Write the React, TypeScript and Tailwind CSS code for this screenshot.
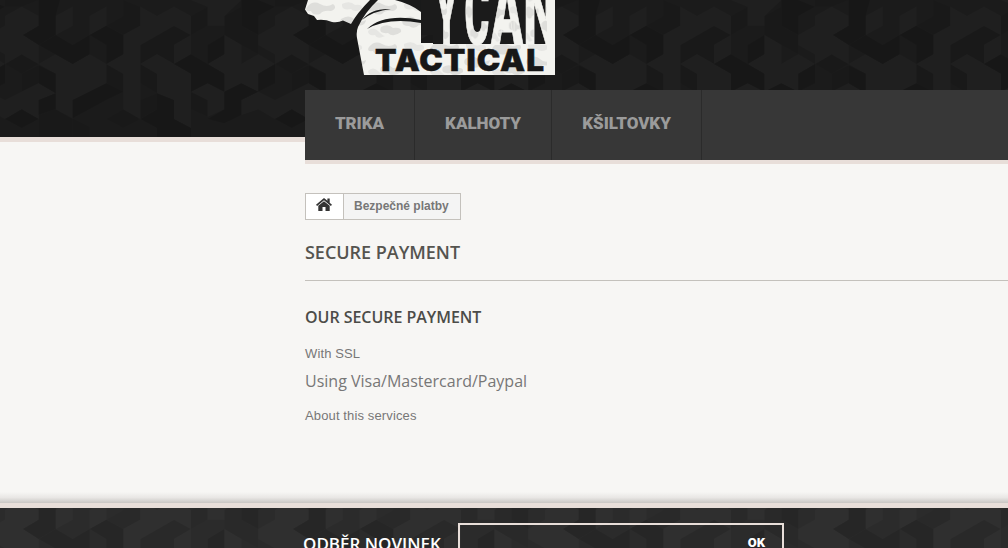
import React from 'react';

// Points are on a 810 unit wide cube grid, drawn at one third of that size
const DARK = [
  '116,0 180,0 167,48 167,105 116,135 69,105 116,77',
  '116,135 167,105 218,135 269,105 319,77 370,105 370,163 319,192 319,135 269,105 269,163 218,192',
  '116,196 167,221 167,280 116,250',
  '218,300 319,250 370,275 319,300 218,355',
  '522,192 573,163 623,192 673,221 673,275 623,250 573,275 573,221',
  '623,135 673,105 673,163 623,192',
  '775,221 825,192 825,250 775,275',
  '421,357 471,328 471,280 522,300 522,357 573,384 573,410 471,410 471,384',
  '623,357 673,328 673,275 724,250 775,275 724,300 724,345 673,370',
  '15,357 65,328 116,357 65,384',
  '116,300 167,280 167,328 116,345',
  '724,0 775,0 825,20 775,48 775,105 724,77',
];

const MID = [
  '15,192 65,163 116,192 65,221',
  '421,135 522,77 573,105 522,135 522,192 471,163 421,192',
  '319,192 370,221 370,280 319,250',
  '421,192 471,221 471,280 421,250',
  '370,0 421,20 421,77 370,105 319,77 370,48',
  '573,48 623,20 623,77 573,105',
  '673,48 724,20 724,77 775,105 775,163 724,135 673,105',
  '421,300 471,280 471,328 421,357',
  '573,275 623,300 623,350 573,328',
  '65,221 116,196 116,250 65,275',
  '15,0 116,0 65,20 15,20',
  '116,345 167,328 218,357 218,410 116,410',
  '218,355 269,380 269,410 218,410',
  '319,357 370,328 421,357 370,384',
];

const LIGHT = [
  '15,48 65,20 116,48 116,77 69,105 116,135 116,192 65,163 15,192',
  '167,48 218,20 218,77 167,105',
  '269,48 319,20 319,77 269,105',
  '116,192 167,163 218,192 269,163 319,192 319,250 218,300 218,355 167,328 167,221',
  '370,105 421,77 421,20 471,48 522,20 573,48 573,105 522,77 421,135 421,357 370,328 370,221 319,192 370,163',
  '421,192 471,163 522,192 573,221 573,384 522,357 522,300 471,280 471,221',
  '522,135 573,105 573,163 522,192',
  '623,192 673,163 673,105 724,135 724,192 775,163 825,192 775,221 775,275 724,250 673,275 673,221',
  '573,275 623,250 673,275 673,328 623,350 623,300',
  '15,300 116,250 167,280 116,300 116,357 65,328 15,357',
  '724,300 775,275 825,300 825,357 775,328 724,345',
  '775,105 825,77 825,163 775,135',
  '573,0 724,0 673,48 673,77 623,77 623,20',
];

function Cubes({ id, y, base, dark, mid, light }: {
  id: string; y: number; base: string; dark: string; mid: string; light: string;
}) {
  return (
    <svg className="absolute inset-0 h-full w-full" aria-hidden="true">
      <defs>
        <pattern id={id} width="270" height="137" y={y} patternUnits="userSpaceOnUse" x="5">
          <rect width="270" height="137" fill={base} />
          <g transform="translate(-5 0) scale(.33333)">
            {MID.map((p) => <polygon key={p} points={p} fill={mid} />)}
            {LIGHT.map((p) => <polygon key={p} points={p} fill={light} />)}
            {DARK.map((p) => <polygon key={p} points={p} fill={dark} />)}
          </g>
        </pattern>
      </defs>
      <rect width="100%" height="100%" fill={`url(#${id})`} />
    </svg>
  );
}

function Logo() {
  return (
    <svg className="relative block" width="250" height="75" viewBox="0 0 250 75">
      <defs>
        <pattern id="camo" width="62" height="40" patternUnits="userSpaceOnUse">
          <rect width="62" height="40" fill="#f3f3ef" />
          <path d="M2 7q6-7 13-3t13 0q5 4-2 7-8-1-11 3-7 2-9-3-7 1-4-4zM36 19q8-5 13 0t12 1q-1 7-9 5-5 5-10 1-9 0-6-7zM14 27q7-4 12 1 9-1 8 4-8 6-13 1-10 1-7-6z" fill="#dededb" />
          <path d="M37 4q8-4 13 1 8-1 7 4-7 4-11 0-10 2-9-5zM1 31q5-5 10 0t7 5q-8 4-10-1-7 1-7-4z" fill="#e6e6e3" />
        </pattern>
      </defs>
      <path
        d="M3 0L0 9.500L3 14L9 16L12 20Q20 19 27 22Q33 23 38 20.500L46 24Q52 13 65 0z"
        fill="url(#camo)"
      />
      <path d="M73 0Q60 12 53 27Q51 32 52 38L59 75H250V43H116V0z" fill="url(#camo)" />
      <path d="M57 20Q66 8 86 9Q68 11 57 20zM62 29Q79 13 116 20V23Q83 17 62 29zM90 0H116V12Q106 4 90 0z" fill="#191a1a" />
      <path d="M116 0H242V44H128V35H116z" fill="#1b1b1b" />
      <g
        fontFamily="Roboto, sans-serif" fontWeight="900" fontSize="92"
        fill="url(#camo)" stroke="#f3f3ef" strokeWidth="1"
      >
        <text transform="translate(130 44) scale(.4 1)">Y</text>
        <text transform="translate(159.500 43.500) scale(.41 1)">C</text>
        <text transform="translate(186 44) scale(.51 1)">A</text>
        <text transform="translate(218.500 44) scale(.51 1)">N</text>
      </g>
      <path d="M242 0H250V75H242z" fill="#f3f3ef" />
      <text
        x="70" y="70.500" textLength="170" lengthAdjust="spacingAndGlyphs" letterSpacing="1"
        fontFamily="Inter, sans-serif" fontWeight="900" fontSize="29.500" fill="#171717"
        stroke="#171717" strokeWidth=".5"
      >
        TACTICAL
      </text>
    </svg>
  );
}

function HomeIcon() {
  return (
    <svg className="-mt-px -ml-[2px]" width="16" height="13" viewBox="0 0 16 13" fill="#333">
      <path d="M8 3.200L2.300 7.800V13H6.500V9h3v4h4.200V7.800z" />
      <path d="M8 0L0 6.700l1.100 1.200L8 2.200l6.900 5.700L16 6.700l-2.300-2V.6h-2.300v2.200z" />
    </svg>
  );
}

const MENU = [
  { label: 'TRIKA', width: 'w-[110px]' },
  { label: 'KALHOTY', width: 'w-[137px]' },
  { label: 'KŠILTOVKY', width: 'w-[150px]' },
];

export default function App() {
  return (
    <div className="flex h-[548px] w-full flex-col overflow-hidden bg-[#f7f6f4] font-['Liberation_Sans',sans-serif] text-[13px] text-[#777]">
      <header className="relative h-[142px] shrink-0 border-b-5 border-[#e8ded9]">
        <Cubes id="top" y={0} base="#1b1b1b" dark="#171717" mid="#191919" light="#1f1f1f" />
        <div className="relative pl-[305px]">
          <Logo />
          <nav className="mt-[15px] flex h-[74px] border-b-4 border-[#e8ded9] bg-[#373737]">
            {MENU.map((m) => (
              <a
                key={m.label}
                className={`${m.width} border-r border-[#2b2b2b] pt-[21px] text-center font-[Roboto,sans-serif] text-[17px] leading-6 font-black tracking-[-0.05px] whitespace-nowrap text-[#9b9b9b]`}
              >
                {m.label}
              </a>
            ))}
          </nav>
        </div>
      </header>

      <main className="flex-1 pt-[51px] pl-[305px]">
        <div className="flex h-[27px] w-[156px] border border-[#c4c1bc] bg-[#f4f4f4] text-[12px] font-bold">
          <a className="flex w-[38px] shrink-0 justify-center border-r border-[#c4c1bc] bg-white pt-[5px]">
            <HomeIcon />
          </a>
          <span className="pl-[10px] leading-[24px] whitespace-nowrap">Bezpečné platby</span>
        </div>
        <h1 className="mt-5 h-[41px] border-b border-[#c4c1bc] font-['Open_Sans',sans-serif] text-[18px] leading-[25px] font-semibold tracking-[-0.03px] text-[#55544f]">
          SECURE PAYMENT
        </h1>
        <h2 className="mt-[25px] font-['Open_Sans',sans-serif] text-[16px] leading-[22px] font-semibold tracking-[-0.04px] text-[#4c4c48]">
          OUR SECURE PAYMENT
        </h2>
        <p className="mt-[17px] leading-[18px] tracking-[0.12px]">With SSL</p>
        <p className="mt-[7px] font-['Open_Sans',sans-serif] text-[16px] leading-[22px]">
          Using Visa/Mastercard/Paypal
        </p>
        <p className="mt-[15px] leading-[18px] tracking-[0.13px]">About this services</p>
      </main>

      <div className="h-[11px] shrink-0 bg-linear-to-b from-[#f7f6f4] via-[#e9e7e5] to-[#c9c6c3]" />
      <footer className="relative h-[45px] shrink-0 overflow-hidden border-t-5 border-[#e8ded9]">
        <Cubes id="bottom" y={-14} base="#2b2b2b" dark="#262626" mid="#292929" light="#2f2f2f" />
        <div className="relative flex pl-[303px]">
          <h4 className="w-[155px] pt-[24px] font-['Open_Sans',sans-serif] text-[17px] leading-6 font-semibold whitespace-nowrap text-white">
            ODBĚR NOVINEK
          </h4>
          <div className="mt-[15px] flex h-[43px] w-[326px] justify-end border-2 border-[#e8ded9] pt-[6px] pr-[17px] font-[Roboto,sans-serif] text-[13px] leading-6 font-black text-white">
            OK
          </div>
        </div>
      </footer>
    </div>
  );
}
